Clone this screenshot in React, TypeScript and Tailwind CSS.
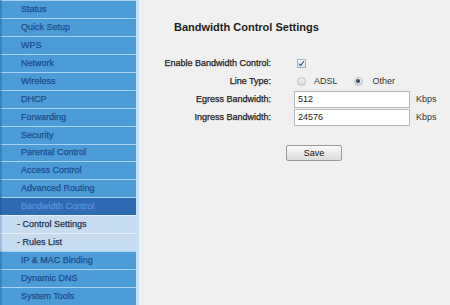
import React from "react";

const items: { label: string; kind: "main" | "active" | "sub" }[] = [
  { label: "Status", kind: "main" },
  { label: "Quick Setup", kind: "main" },
  { label: "WPS", kind: "main" },
  { label: "Network", kind: "main" },
  { label: "Wireless", kind: "main" },
  { label: "DHCP", kind: "main" },
  { label: "Forwarding", kind: "main" },
  { label: "Security", kind: "main" },
  { label: "Parental Control", kind: "main" },
  { label: "Access Control", kind: "main" },
  { label: "Advanced Routing", kind: "main" },
  { label: "Bandwidth Control", kind: "active" },
  { label: "- Control Settings", kind: "sub" },
  { label: "- Rules List", kind: "sub" },
  { label: "IP & MAC Binding", kind: "main" },
  { label: "Dynamic DNS", kind: "main" },
  { label: "System Tools", kind: "main" },
];

function MenuItem({ label, kind }: { label: string; kind: "main" | "active" | "sub" }) {
  if (kind === "sub") {
    return (
      <div className="h-[18px] border-t border-[#e2edf7] bg-[#c7ddef] flex items-center pl-[15px] text-[#1c3558] border-l-2 border-l-[#9fbfdc] [-webkit-text-stroke:0.25px]">
        {label}
      </div>
    );
  }
  if (kind === "active") {
    return (
      <div className="h-[18px] border-t border-[#a9d3f1] bg-[#2e6bb3] flex items-center pl-[19px] text-[#5a93d6] border-l-2 border-l-[#2a5fa0] [-webkit-text-stroke:0.25px]">
        {label}
      </div>
    );
  }
  return (
    <div className="h-[18px] border-t border-[#a9d3f1] bg-[#4b9cd7] flex items-center pl-[19px] text-[#1b4f8e] border-l-2 border-l-[#3b84c2] [-webkit-text-stroke:0.25px]">
      {label}
    </div>
  );
}

function Radio({ checked }: { checked?: boolean }) {
  return (
    <span className="w-[9px] h-[9px] rounded-full border border-[#b9bec4] bg-gradient-to-b from-[#f4f4f4] to-[#d8d8d8] flex items-center justify-center">
      {checked && <span className="w-[4px] h-[4px] rounded-full bg-[#2f4d66]" />}
    </span>
  );
}

export default function App() {
  return (
    <div
      className="w-[450px] h-[305px] flex bg-[#f0f0f0] overflow-hidden text-[9px] leading-none"
      style={{ fontFamily: '"Liberation Sans", Arial, sans-serif' }}
    >
      <div className="w-[139px] shrink-0 flex flex-col border-r-[3px] border-r-[#c4e1f5]">
        {items.map((it) => (
          <MenuItem key={it.label} label={it.label} kind={it.kind} />
        ))}
      </div>
      <div className="flex-1 flex flex-col">
        <div className="pt-[21px] pl-[35px] text-[11px] leading-[13px] font-bold text-[#1e1e1e]">
          Bandwidth Control Settings
        </div>
        <div className="mt-[20px] grid grid-cols-[132px_1fr] gap-x-[23px] text-[#222]">
          <div className="h-[18px] flex items-center justify-end [-webkit-text-stroke:0.25px]">Enable Bandwidth Control:</div>
          <div className="h-[18px] flex items-center">
            <span className="ml-[3px] w-[9px] h-[9px] border border-[#a3b2c2] bg-gradient-to-b from-[#f2f5f8] to-[#dde4ec] flex items-center justify-center">
              <svg width="7" height="7" viewBox="0 0 7 7">
                <path d="M1.2 3.8 L2.8 5.5 L5.8 1.2" fill="none" stroke="#2a4a70" strokeWidth="1.1" />
              </svg>
            </span>
          </div>

          <div className="h-[18px] flex items-center justify-end [-webkit-text-stroke:0.25px]">Line Type:</div>
          <div className="h-[18px] flex items-center">
            <span className="ml-[3px]">
              <Radio />
            </span>
            <span className="ml-[8px] text-[#333]">ADSL</span>
            <span className="ml-[16px]">
              <Radio checked />
            </span>
            <span className="ml-[10px] text-[#333]">Other</span>
          </div>

          <div className="h-[18px] flex items-center justify-end [-webkit-text-stroke:0.25px]">Egress Bandwidth:</div>
          <div className="h-[18px] flex items-center">
            <div className="w-[116px] h-[17px] bg-white border border-[#b4b9bf] flex items-center pl-[3px] text-[#222]">
              512
            </div>
            <span className="ml-[6px] text-[#333]">Kbps</span>
          </div>

          <div className="h-[18px] flex items-center justify-end [-webkit-text-stroke:0.25px]">Ingress Bandwidth:</div>
          <div className="h-[18px] flex items-center">
            <div className="w-[116px] h-[17px] bg-white border border-[#b4b9bf] flex items-center pl-[3px] text-[#222]">
              24576
            </div>
            <span className="ml-[6px] text-[#333]">Kbps</span>
          </div>
        </div>
        <div className="mt-[19px] pl-[147px]">
          <div className="w-[56px] h-[16px] rounded-[2px] border border-[#9a9a9a] bg-gradient-to-b from-[#fafafa] to-[#dcdcdc] flex items-center justify-center text-[#111]">
            Save
          </div>
        </div>
      </div>
    </div>
  );
}
